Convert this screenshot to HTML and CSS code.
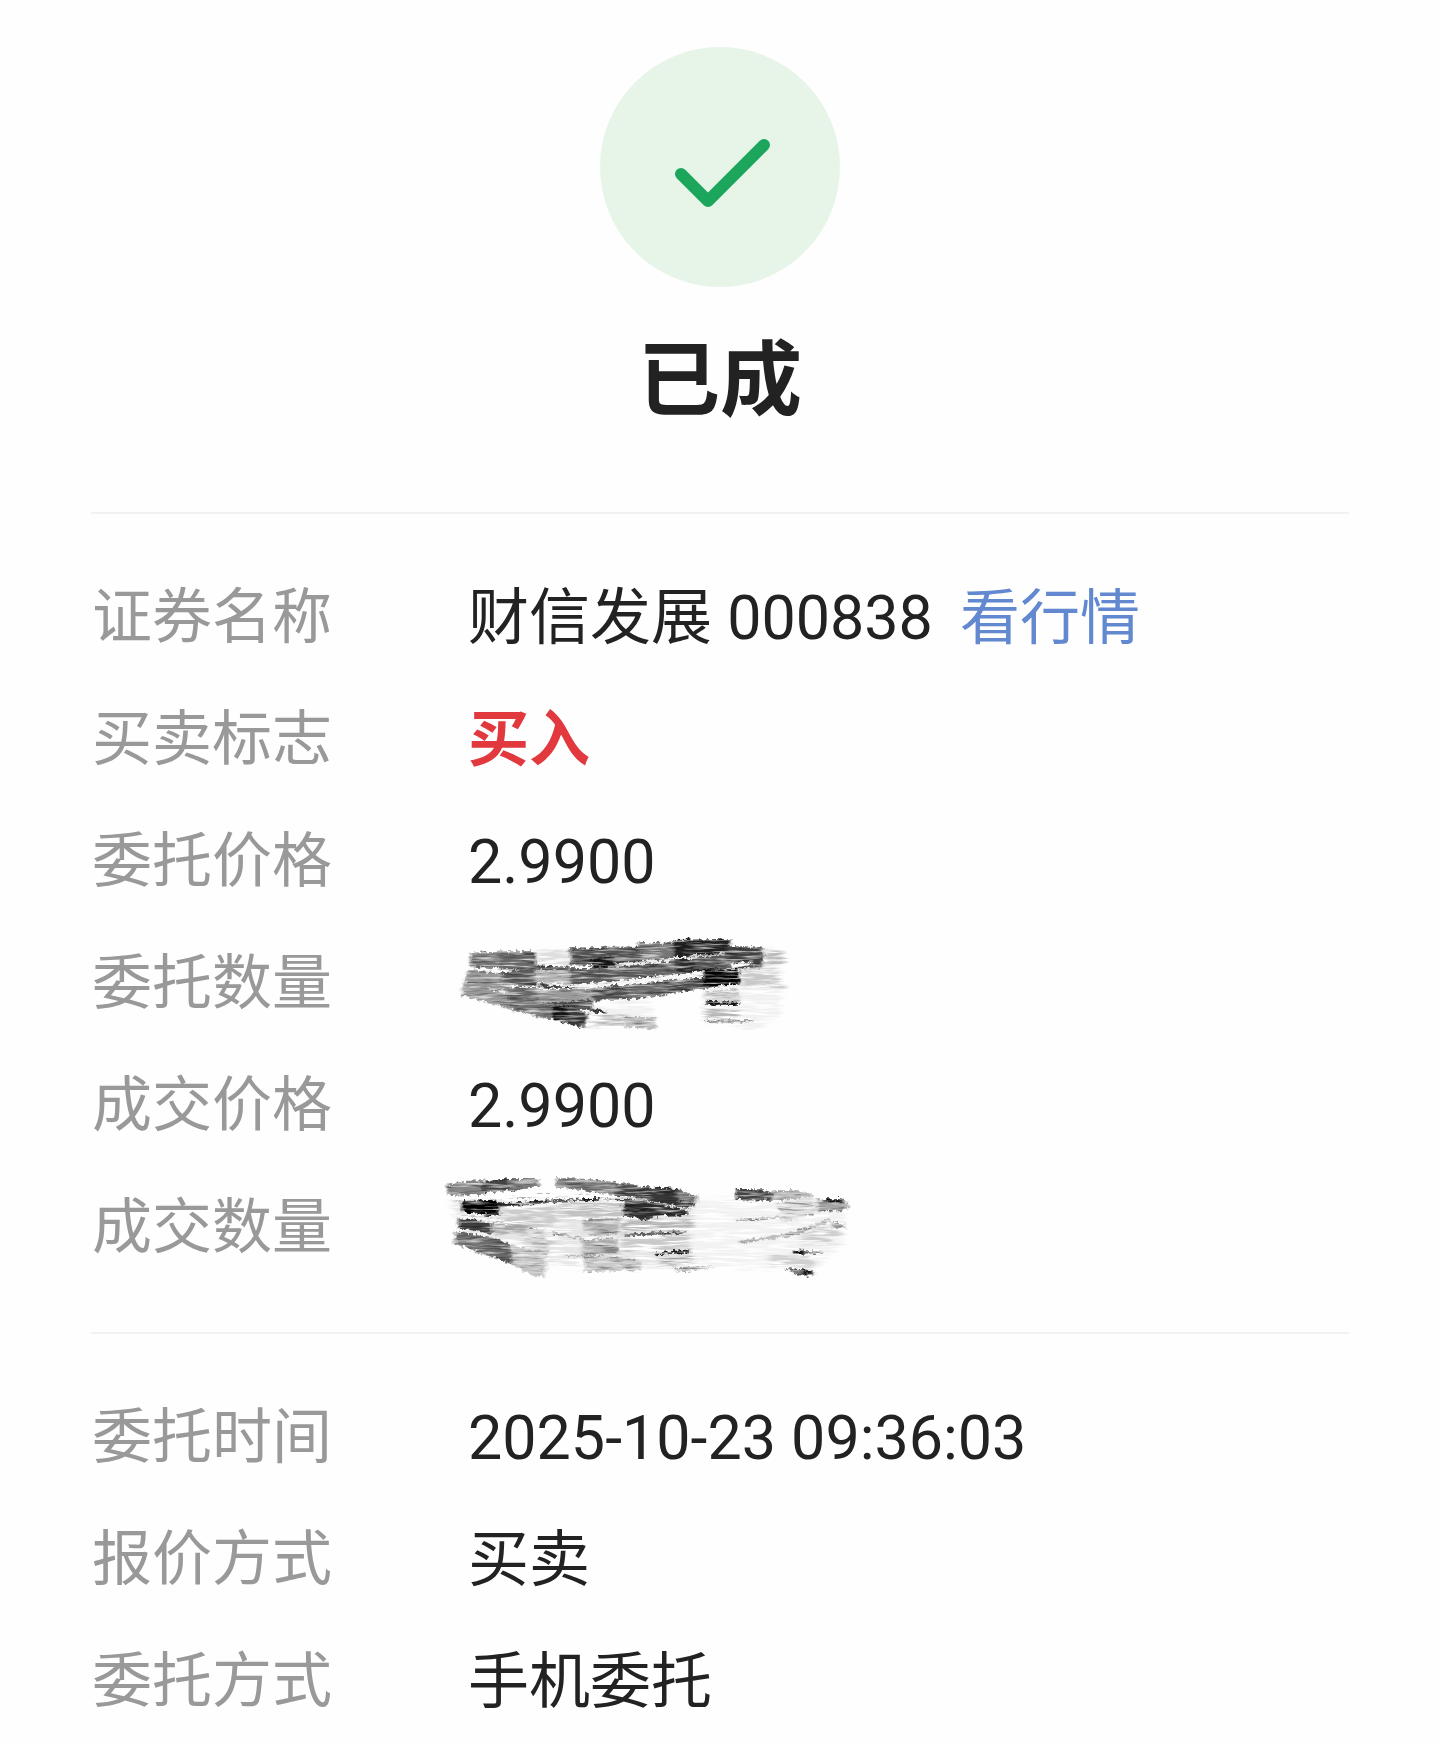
FILE: index.html
```html
<!DOCTYPE html>
<html lang="zh-CN">

<head>
  <meta charset="UTF-8">
  <meta name="viewport" content="width=device-width, initial-scale=1.0">
  <title>委托详情</title>
  <link rel="stylesheet" href="styles.css">
</head>

<body>

  <main class="order">
    <header class="status">
      <svg class="status-icon" viewBox="0 0 240 240" aria-hidden="true">
        <circle cx="120" cy="120" r="120" fill="#e7f5e9"/>
        <path d="M81 127 L108 154 L164 98" fill="none" stroke="#1ba65c" stroke-width="12" stroke-linecap="round" stroke-linejoin="round"/>
      </svg>
      <h1>已成</h1>
    </header>

    <dl class="details">
      <div class="row">
        <dt>证券名称</dt>
        <dd>财信发展 000838 <a class="quote" href="#">看行情</a></dd>
      </div>
      <div class="row">
        <dt>买卖标志</dt>
        <dd class="buy">买入</dd>
      </div>
      <div class="row">
        <dt>委托价格</dt>
        <dd>2.9900</dd>
      </div>
      <div class="row">
        <dt>委托数量</dt>
        <dd>
          <svg class="scribble scribble-order" viewBox="0 0 1080 375" aria-hidden="true">
            <defs>
              <!-- ragged edges and horizontal bristle marks -->
              <filter id="brush" x="-5%" y="-10%" width="110%" height="120%" color-interpolation-filters="sRGB">
                <feTurbulence type="fractalNoise" baseFrequency="0.08" numOctaves="3" seed="4" result="rough"/>
                <feGaussianBlur in="SourceGraphic" stdDeviation="4 2" result="soft"/>
                <feDisplacementMap in="soft" in2="rough" scale="20" xChannelSelector="R" yChannelSelector="G" result="shape"/>
                <feTurbulence type="fractalNoise" baseFrequency="0.012 0.14" numOctaves="3" seed="9" result="grain"/>
                <feColorMatrix in="grain" type="matrix" values="0 0 0 0 1  0 0 0 0 1  0 0 0 0 1  2 0 0 0 -0.92" result="streaks"/>
                <feColorMatrix in="grain" type="matrix" values="0 0 0 0 0  0 0 0 0 0  0 0 0 0 0  0 1.4 0 0 -0.7" result="bristles"/>
                <feComposite in="streaks" in2="shape" operator="in" result="light"/>
                <feComposite in="bristles" in2="shape" operator="in" result="dark"/>
                <feMerge>
                  <feMergeNode in="shape"/>
                  <feMergeNode in="dark"/>
                  <feMergeNode in="light"/>
                </feMerge>
              </filter>
              <filter id="wash" x="-5%" y="-15%" width="110%" height="130%" color-interpolation-filters="sRGB">
                <feTurbulence type="fractalNoise" baseFrequency="0.01 0.12" numOctaves="3" seed="6" result="grain"/>
                <feGaussianBlur in="SourceGraphic" stdDeviation="8 5" result="soft"/>
                <feDisplacementMap in="soft" in2="grain" scale="50" xChannelSelector="R" yChannelSelector="G" result="shape"/>
                <feColorMatrix in="grain" type="matrix" values="0 0 0 0 1  0 0 0 0 1  0 0 0 0 1  4 0 0 0 -1.85" result="streaks"/>
                <feComposite in="streaks" in2="shape" operator="in" result="light"/>
                <feMerge>
                  <feMergeNode in="shape"/>
                  <feMergeNode in="light"/>
                </feMerge>
              </filter>
            </defs>
            <g filter="url(#wash)">
              <path d="M900 110 L1020 100 L1015 290 L940 325 L800 310 L790 215Z" fill="#f1f1f1"/>
              <path d="M440 260 L640 240 L640 310 L440 310Z" fill="#f1f1f1"/>
              <path d="M285 90 L385 95 L400 140 L290 138Z" fill="#dedede"/>
              <path d="M970 90 L1030 92 L1025 135 L968 130Z" fill="#bbb"/>
              <path d="M900 152 L1000 150 L1030 200 L905 200Z" fill="#c9c9c9"/>
              <path d="M790 268 L890 264 L890 295 L797 295Z" fill="#b5b5b5"/>
              <path d="M440 280 L550 295 L548 320 L440 314Z" fill="#bcbcbc"/>
            </g>
            <g filter="url(#brush)">
              <path d="M90 98 L180 95 L190 150 L90 138Z" fill="#808080"/>
              <path d="M175 95 L285 93 L290 150 L185 148Z" fill="#686868"/>
              <path d="M290 136 L385 140 L385 152 L290 150Z" fill="#555"/>
              <path d="M85 150 L185 158 L195 200 L290 205 L340 255 L338 300 L230 275 L65 225Z" fill="#999"/>
              <path d="M180 155 L285 143 L290 200 L190 195Z" fill="#5a5a5a"/>
              <path d="M200 205 L295 205 L345 245 L335 298 L215 265Z" fill="#707070"/>
              <path d="M285 150 L390 150 L390 192 L285 185Z" fill="#b2b2b2"/>
              <path d="M300 190 L405 196 L405 205 L300 202Z" fill="#333"/>
              <path d="M285 208 L460 206 L455 248 L300 248Z" fill="#999"/>
              <path d="M320 246 L455 240 L458 266 L345 268Z" fill="#505050"/>
              <path d="M388 85 L470 85 L500 80 L595 80 L595 70 L700 68 L705 112 L520 140 L395 135Z" fill="#555"/>
              <path d="M595 70 L700 68 L705 112 L610 122Z" fill="#777"/>
              <path d="M390 145 L500 143 L705 120 L710 162 L390 196Z" fill="#606060"/>
              <path d="M450 120 L520 108 L528 140 L460 145Z" fill="#161616"/>
              <path d="M455 204 L565 195 L568 236 L460 242Z" fill="#545454"/>
              <path d="M560 196 L680 182 L680 225 L565 238Z" fill="#6c6c6c"/>
              <path d="M675 182 L800 172 L805 205 L680 222Z" fill="#505050"/>
              <path d="M700 60 L870 57 L870 105 L705 112Z" fill="#222"/>
              <path d="M705 118 L860 108 L862 145 L710 162Z" fill="#2c2c2c"/>
              <path d="M760 108 L865 104 L862 142 L765 148Z" fill="#585858"/>
              <path d="M860 78 L970 80 L965 145 L865 145Z" fill="#424242"/>
              <path d="M790 150 L895 146 L900 190 L795 204Z" fill="#000"/>
              <path d="M790 215 L890 205 L900 245 L795 244Z" fill="#d0d0d0"/>
              <path d="M798 246 L898 248 L898 255 L800 254Z" fill="#111"/>
              <path d="M800 302 L940 300 L938 307 L800 308Z" fill="#999"/>
              <path d="M338 255 L400 262 L440 280 L435 325 L340 300Z" fill="#3a3a3a"/>
              <path d="M338 255 L385 262 L388 310 L340 298Z" fill="#111"/>
              <path d="M450 266 L495 274 L495 281 L455 276Z" fill="#333"/>
              <path d="M550 290 L645 292 L645 328 L552 322Z" fill="#bcbcbc"/>
              <path d="M95 138 L210 152 L205 160 L98 148Z" fill="#fefefe"/>
              <path d="M145 204 L200 209 L195 216 L150 212Z" fill="#eee"/>
              <path d="M525 130 L700 116 L700 123 L530 140Z" fill="#eee"/>
              <path d="M320 189 L410 196 L790 158 L790 166 L415 204 L320 196Z" fill="#f4f4f4"/>
              <path d="M740 107 L855 99 L855 106 L745 114Z" fill="#ddd"/>
              <path d="M870 132 L935 124 L935 134 L875 145Z" fill="#fefefe"/>
            </g>
          </svg>
        </dd>
      </div>
      <div class="row">
        <dt>成交价格</dt>
        <dd>2.9900</dd>
      </div>
      <div class="row">
        <dt>成交数量</dt>
        <dd>
          <svg class="scribble scribble-deal" viewBox="0 0 1290 375" aria-hidden="true">
            <g filter="url(#wash)">
              <path d="M60 110 L780 105 L785 310 L480 315 L340 290 L90 190Z" fill="#e6e6e6"/>
              <path d="M780 110 L1240 110 L1240 230 L1150 320 L850 300 L780 300Z" fill="#f2f2f2"/>
              <path d="M210 130 L350 120 L385 150 L360 250 L285 240 L210 170Z" fill="#ccc"/>
              <path d="M385 125 L575 112 L575 160 L390 165Z" fill="#c2c2c2"/>
              <path d="M565 172 L785 165 L785 198 L570 200Z" fill="#b5b5b5"/>
              <path d="M570 222 L775 215 L770 258 L575 262Z" fill="#c9c9c9"/>
              <path d="M690 280 L785 270 L785 298 L690 300Z" fill="#a0a0a0"/>
              <path d="M1010 278 L1150 270 L1145 312 L1020 305Z" fill="#d0d0d0"/>
              <path d="M1110 210 L1180 180 L1230 200 L1200 240 L1110 240Z" fill="#cfcfcf"/>
              <path d="M185 178 L285 170 L285 205 L190 212Z" fill="#a5a5a5"/>
            </g>
            <g filter="url(#brush)">
              <path d="M50 62 L110 50 L160 48 L165 92 L55 95Z" fill="#858585"/>
              <path d="M155 55 L210 46 L325 46 L325 68 L230 82 L160 85Z" fill="#444"/>
              <path d="M230 46 L325 45 L328 68 L235 78Z" fill="#7a7a7a"/>
              <path d="M380 42 L480 45 L620 62 L620 100 L550 92 L378 68Z" fill="#808080"/>
              <path d="M555 62 L630 66 L635 104 L555 96Z" fill="#4c4c4c"/>
              <path d="M625 68 L740 75 L800 98 L795 118 L775 135 L630 104Z" fill="#383838"/>
              <path d="M740 78 L800 98 L790 118 L740 110Z" fill="#777"/>
              <path d="M94 112 L180 103 L208 118 L205 155 L100 145Z" fill="#000"/>
              <path d="M190 120 L355 109 L355 117 L210 128Z" fill="#222"/>
              <path d="M350 110 L490 101 L490 107 L355 116Z" fill="#555"/>
              <path d="M455 102 L510 103 L508 110 L458 110Z" fill="#111"/>
              <path d="M510 103 L620 105 L775 140 L770 148 L620 115Z" fill="#3b3b3b"/>
              <path d="M580 112 L660 115 L775 142 L775 152 L670 158 L655 170 L580 152Z" fill="#2c2c2c"/>
              <path d="M88 162 L185 178 L188 210 L85 192Z" fill="#404040"/>
              <path d="M76 202 L190 222 L245 245 L250 302 L160 270 L76 240Z" fill="#6a6a6a"/>
              <path d="M458 168 L565 162 L568 208 L500 220 L462 205Z" fill="#b0b0b0"/>
              <path d="M455 230 L560 222 L565 270 L460 275Z" fill="#b0b0b0"/>
              <path d="M460 275 L570 280 L630 290 L630 318 L465 325Z" fill="#cacaca"/>
              <path d="M240 245 L330 260 L350 298 L342 340 L310 335 L245 300Z" fill="#c4c4c4"/>
              <path d="M290 195 L345 195 L355 280 L330 285Z" fill="#d4d4d4"/>
              <path d="M365 204 L460 220 L455 227 L370 212Z" fill="#b5b5b5"/>
              <path d="M410 272 L620 285 L618 291 L410 278Z" fill="#aaa"/>
              <path d="M585 209 L765 201 L765 209 L590 217Z" fill="#606060"/>
              <path d="M675 266 L780 256 L780 265 L680 274Z" fill="#181818"/>
              <path d="M735 310 L775 308 L775 324 L740 322Z" fill="#999"/>
              <path d="M775 308 L850 306 L850 314 L780 318Z" fill="#ddd"/>
              <path d="M918 75 L1000 76 L1030 90 L1025 110 L920 108Z" fill="#444"/>
              <path d="M1025 78 L1090 78 L1160 95 L1100 105 L1030 108Z" fill="#b8b8b8"/>
              <path d="M1040 118 L1150 98 L1160 150 L1060 175Z" fill="#dedede"/>
              <path d="M920 166 L1050 156 L1050 162 L922 171Z" fill="#c4c4c4"/>
              <path d="M925 232 L1080 208 L1195 165 L1200 171 L1090 216 L930 239Z" fill="#bbb"/>
              <path d="M1160 106 L1240 105 L1258 125 L1245 138 L1165 142Z" fill="#a5a5a5"/>
              <path d="M1180 103 L1236 103 L1236 115 L1182 115Z" fill="#111"/>
              <path d="M1205 175 L1245 178 L1240 193 L1210 193Z" fill="#a5a5a5"/>
              <path d="M1088 260 L1175 263 L1170 270 L1090 268Z" fill="#777"/>
              <path d="M1092 260 L1120 260 L1120 268 L1094 268Z" fill="#111"/>
              <path d="M1065 312 L1148 318 L1146 336 L1100 330Z" fill="#777"/>
              <path d="M1115 318 L1148 318 L1146 330 L1118 328Z" fill="#161616"/>
              <path d="M70 106 L350 88 L620 98 L620 105 L350 98 L75 113Z" fill="#fefefe"/>
              <path d="M92 150 L240 170 L235 178 L95 160Z" fill="#fefefe"/>
            </g>
          </svg>
        </dd>
      </div>
    </dl>

    <dl class="details">
      <div class="row">
        <dt>委托时间</dt>
        <dd>2025-10-23 09:36:03</dd>
      </div>
      <div class="row">
        <dt>报价方式</dt>
        <dd>买卖</dd>
      </div>
      <div class="row">
        <dt>委托方式</dt>
        <dd>手机委托</dd>
      </div>
    </dl>
  </main>

</body>

</html>
```

FILE: styles.css
```css
body {
  font-family: Roboto, "Noto Sans CJK SC", sans-serif;
  background-color: #fefefe;
  color: #222;
  margin: 0;
}

.order {
  padding: 47px 91px 0;
}

.status {
  display: flex;
  flex-direction: column;
  align-items: center;
  gap: 46px;
  padding-bottom: 83px;
}

.status-icon {
  width: 240px;
  height: 240px;
}

h1 {
  margin: 0;
  font-size: 82px;
  line-height: 96px;
  font-weight: 700;
}

.details {
  display: flex;
  flex-direction: column;
  gap: 50px;
  margin: 0;
  padding: 68px 0;
  border-top: 2px solid #f1f1f1;
  font-size: 60px;
  line-height: 72px;
}

.details:last-child {
  padding-bottom: 24px;
}

.row {
  display: grid;
  grid-template-columns: 376px 1fr;
  height: 72px;
  padding-left: 1px;
}

dt {
  color: #999;
}

dd {
  margin: 0;
  font-size: 61px;
}

.buy {
  color: #e1393e;
  font-weight: 700;
}

.quote {
  margin-left: 12px;
  color: #6288cf;
  font-size: 60px;
  text-decoration: none;
}

/* the brush strokes reach past the row on every side */
.scribble {
  display: block;
  height: 125px;
}

.scribble-order {
  width: 360px;
  margin: -28px 0 -25px -28px;
}

.scribble-deal {
  width: 430px;
  margin: -28px 0 -25px -38px;
}
```
